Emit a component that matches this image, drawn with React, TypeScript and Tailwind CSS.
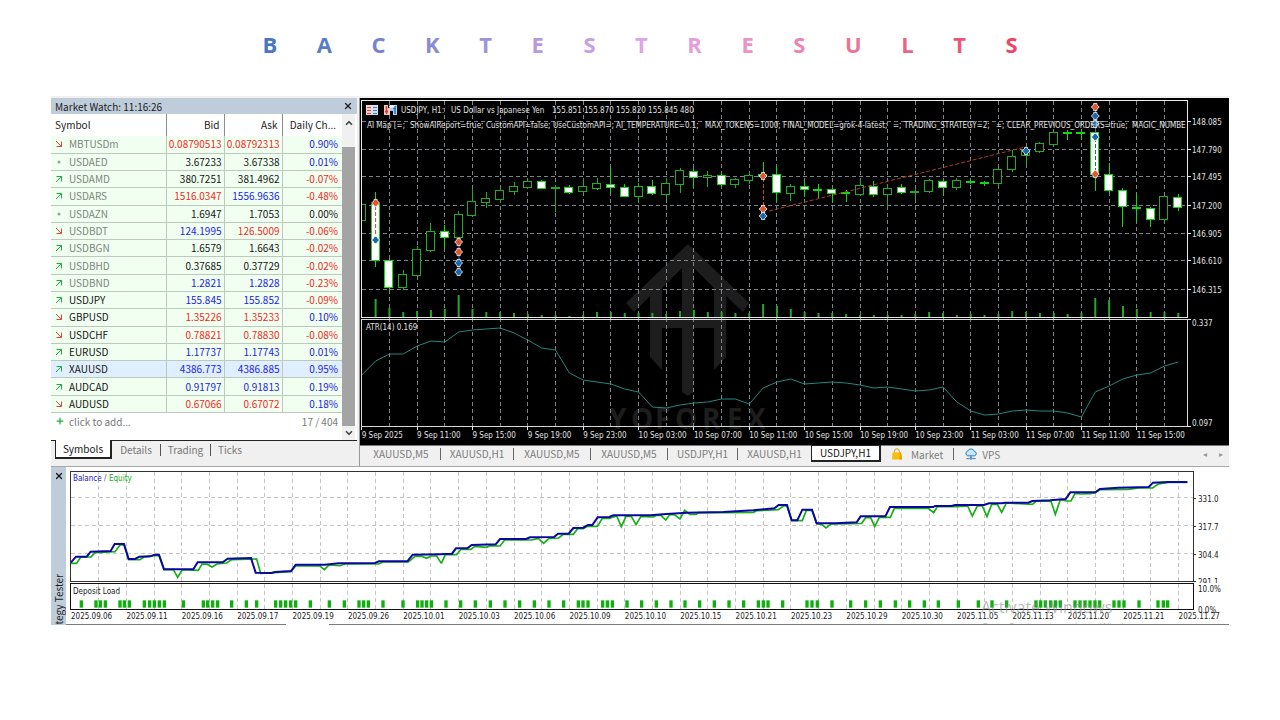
import { ChevronDown, ChevronUp, Plus, X } from 'lucide-react'
import { clsx } from 'clsx'

const TITLE = [
  { letter: 'B', color: 'text-[#4a78c0]' },
  { letter: 'A', color: 'text-[#5a7dc6]' },
  { letter: 'C', color: 'text-[#7584cb]' },
  { letter: 'K', color: 'text-[#8a8bd0]' },
  { letter: 'T', color: 'text-[#a093d7]' },
  { letter: 'E', color: 'text-[#b59bde]' },
  { letter: 'S', color: 'text-[#c8a0e3]' },
  { letter: 'T', color: 'text-[#dda4e8]' },
  { letter: 'R', color: 'text-[#e69ddb]' },
  { letter: 'E', color: 'text-[#ea93c8]' },
  { letter: 'S', color: 'text-[#ea86b2]' },
  { letter: 'U', color: 'text-[#eb7499]' },
  { letter: 'L', color: 'text-[#ec6485]' },
  { letter: 'T', color: 'text-[#ed5576]' },
  { letter: 'S', color: 'text-[#ef4763]' },
]

type Tone = 'up' | 'down' | 'flat'

interface Quote {
  symbol: string
  trend: Tone
  bid: [string, Tone]
  ask: [string, Tone]
  change: [string, Tone]
  muted?: boolean
  selected?: boolean
}

const QUOTES: Quote[] = [
  { symbol: 'MBTUSDm', trend: 'down', bid: ['0.08790513', 'down'], ask: ['0.08792313', 'down'], change: ['0.90%', 'up'], muted: true },
  { symbol: 'USDAED', trend: 'flat', bid: ['3.67233', 'flat'], ask: ['3.67338', 'flat'], change: ['0.01%', 'up'], muted: true },
  { symbol: 'USDAMD', trend: 'up', bid: ['380.7251', 'flat'], ask: ['381.4962', 'flat'], change: ['-0.07%', 'down'], muted: true },
  { symbol: 'USDARS', trend: 'up', bid: ['1516.0347', 'down'], ask: ['1556.9636', 'up'], change: ['-0.48%', 'down'], muted: true },
  { symbol: 'USDAZN', trend: 'flat', bid: ['1.6947', 'flat'], ask: ['1.7053', 'flat'], change: ['0.00%', 'flat'], muted: true },
  { symbol: 'USDBDT', trend: 'down', bid: ['124.1995', 'up'], ask: ['126.5009', 'down'], change: ['-0.06%', 'down'], muted: true },
  { symbol: 'USDBGN', trend: 'up', bid: ['1.6579', 'flat'], ask: ['1.6643', 'flat'], change: ['-0.02%', 'down'], muted: true },
  { symbol: 'USDBHD', trend: 'up', bid: ['0.37685', 'flat'], ask: ['0.37729', 'flat'], change: ['-0.02%', 'down'], muted: true },
  { symbol: 'USDBND', trend: 'up', bid: ['1.2821', 'up'], ask: ['1.2828', 'up'], change: ['-0.23%', 'down'], muted: true },
  { symbol: 'USDJPY', trend: 'up', bid: ['155.845', 'up'], ask: ['155.852', 'up'], change: ['-0.09%', 'down'] },
  { symbol: 'GBPUSD', trend: 'down', bid: ['1.35226', 'down'], ask: ['1.35233', 'down'], change: ['0.10%', 'up'] },
  { symbol: 'USDCHF', trend: 'down', bid: ['0.78821', 'down'], ask: ['0.78830', 'down'], change: ['-0.08%', 'down'] },
  { symbol: 'EURUSD', trend: 'up', bid: ['1.17737', 'up'], ask: ['1.17743', 'up'], change: ['0.01%', 'up'] },
  { symbol: 'XAUUSD', trend: 'up', bid: ['4386.773', 'up'], ask: ['4386.885', 'up'], change: ['0.95%', 'up'], selected: true },
  { symbol: 'AUDCAD', trend: 'up', bid: ['0.91797', 'up'], ask: ['0.91813', 'up'], change: ['0.19%', 'up'] },
  { symbol: 'AUDUSD', trend: 'down', bid: ['0.67066', 'down'], ask: ['0.67072', 'down'], change: ['0.18%', 'up'] },
]

const TONE_CLASS: Record<Tone, string> = {
  up: 'text-[#2222e6]',
  down: 'text-[#f02a1e]',
  flat: 'text-[#151515]',
}

const TrendIcon = ({ trend }: { trend: Tone }) => {
  if (trend === 'flat') {
    return (
      <svg viewBox="0 0 8 8" className="size-2" aria-hidden="true">
        <circle cx="4" cy="4" r="1.5" fill="#8fa595" />
      </svg>
    )
  }
  return (
    <svg viewBox="0 0 8 8" className="size-2" fill="none" strokeWidth="1" aria-hidden="true">
      {trend === 'up' ? (
        <path d="M1.5 1.5H6.5V6.5M6.5 1.5L1 7" stroke="#1fae3d" />
      ) : (
        <path d="M1.5 6.5H6.5V1.5M6.5 6.5L1 1" stroke="#e0483e" />
      )}
    </svg>
  )
}

const MarketWatch = () => {
  return (
    <section className="flex w-[306px] shrink-0 flex-col text-[10px] text-[#222]">
      <header className="flex h-4 items-center justify-between bg-[#bfcddb] px-1 text-[#1c1c1c]">
        <h2>Market Watch: 11:16:26</h2>
        <button type="button" aria-label="Close Market Watch">
          <X className="size-2.5" strokeWidth={3} />
        </button>
      </header>
      <div className="flex flex-1 bg-white pr-0.5">
        <div className="flex flex-1 flex-col">
          <table className="h-[299px] w-full table-fixed border-collapse leading-none">
            <colgroup>
              <col />
              <col className="w-[58px]" />
              <col className="w-[58px]" />
              <col className="w-[60px]" />
            </colgroup>
            <thead>
              <tr className="h-[22px]">
                <th className="border-r border-[#8c8c8c] pl-1 text-left font-normal">Symbol</th>
                <th className="border-r border-[#8c8c8c] pr-1 text-right font-normal">Bid</th>
                <th className="border-r border-[#8c8c8c] pr-1 text-right font-normal">Ask</th>
                <th className="pr-1.5 text-right font-normal">Daily Ch...</th>
              </tr>
            </thead>
            <tbody>
              {QUOTES.map((quote) => (
                <tr
                  key={quote.symbol}
                  className={clsx(
                    'h-[17px] border-b border-[#bccabc]',
                    quote.selected ? 'bg-[#e0efff]' : 'bg-[#f0fff0]',
                  )}
                >
                  <td className="border-r border-[#bccabc] p-0 pl-1">
                    <span className="flex items-center gap-1.5">
                      <TrendIcon trend={quote.trend} />
                      <span className={quote.muted ? 'text-[#7c857c]' : 'text-[#151515]'}>
                        {quote.symbol}
                      </span>
                    </span>
                  </td>
                  <td className={clsx('border-r border-[#bccabc] p-0 pr-0.5 text-right', TONE_CLASS[quote.bid[1]])}>
                    {quote.bid[0]}
                  </td>
                  <td className={clsx('border-r border-[#bccabc] p-0 pr-0.5 text-right', TONE_CLASS[quote.ask[1]])}>
                    {quote.ask[0]}
                  </td>
                  <td className={clsx('p-0 pr-1 text-right', TONE_CLASS[quote.change[1]])}>
                    {quote.change[0]}
                  </td>
                </tr>
              ))}
            </tbody>
          </table>
          <div className="flex h-4 items-center justify-between px-1 text-[#7a7a7a]">
            <button type="button" className="flex items-center gap-1">
              <Plus className="size-2.5 text-[#1fae3d]" strokeWidth={3} />
              click to add...
            </button>
            <span>17 / 404</span>
          </div>
        </div>
        <div className="flex w-[13px] flex-col items-center bg-[#f0f0f0] text-[#444]">
          <ChevronUp className="mt-1 mb-[19px] size-2.5" strokeWidth={4} />
          <div className="w-full flex-1 bg-[#a4a4a4]" />
          <ChevronDown className="my-0.5 size-2.5" strokeWidth={4} />
        </div>
      </div>
      <nav className="flex h-[26px] items-start border-t border-[#222] pl-1 text-[#777]">
        <button
          type="button"
          className="-mt-px h-[19px] w-[57px] border border-t-0 border-r-2 border-b-2 border-[#222] bg-white text-[#151515]"
        >
          Symbols
        </button>
        <button type="button" className="h-[17px] w-12">Details</button>
        <button type="button" className="my-[3px] h-3 w-[51px] border-x border-[#555] leading-[10px]">Trading</button>
        <button type="button" className="h-[17px] w-[38px]">Ticks</button>
      </nav>
    </section>
  )
}

const STEP = 13.84
const FIRST_X = 375.6
const barX = (index: number) => FIRST_X + index * STEP

// [index, high, body top, body bottom, low, filled]
const CANDLES: [number, number, number, number, number, 0 | 1][] = [
  [-1, 204, 204, 220, 220, 0],
  [0, 192, 204, 260, 266, 1],
  [1, 259, 260, 287, 290, 1],
  [2, 270, 274, 287, 289, 0],
  [3, 246, 249, 275, 276, 0],
  [4, 223, 231, 250, 251, 0],
  [5, 225, 231, 237, 247, 1],
  [6, 211, 214, 237, 240, 0],
  [7, 189, 201, 215, 216, 0],
  [8, 192, 198, 202, 207, 0],
  [9, 189, 190, 199, 201, 0],
  [10, 182, 186, 191, 194, 0],
  [11, 180, 181, 187, 188, 0],
  [12, 180, 181, 188, 188, 1],
  [13, 185, 187, 188, 211, 0],
  [14, 185, 187, 192, 193, 1],
  [15, 178, 186, 191, 192, 0],
  [16, 178, 183, 188, 189, 0],
  [17, 168, 184, 187, 192, 1],
  [18, 184, 187, 196, 196, 1],
  [19, 183, 186, 196, 200, 0],
  [20, 180, 186, 193, 194, 1],
  [21, 178, 183, 194, 198, 0],
  [22, 168, 170, 184, 192, 0],
  [23, 168, 171, 177, 187, 1],
  [24, 171, 175, 177, 186, 0],
  [25, 173, 175, 184, 186, 1],
  [26, 178, 179, 184, 187, 0],
  [27, 172, 175, 180, 183, 0],
  [28, 162, 174, 176, 177, 1],
  [29, 166, 174, 192, 201, 1],
  [30, 184, 186, 193, 200, 0],
  [31, 181, 186, 189, 196, 1],
  [32, 184, 189, 190, 198, 1],
  [33, 188, 189, 193, 201, 1],
  [34, 190, 192, 193, 201, 1],
  [35, 179, 185, 194, 195, 0],
  [36, 181, 186, 194, 196, 1],
  [37, 184, 188, 194, 206, 0],
  [38, 184, 187, 192, 193, 1],
  [39, 189, 191, 192, 198, 0],
  [40, 179, 180, 191, 192, 0],
  [41, 179, 181, 187, 195, 1],
  [42, 178, 180, 187, 189, 0],
  [43, 179, 181, 182, 183, 1],
  [44, 181, 182, 183, 185, 1],
  [45, 168, 169, 183, 184, 0],
  [46, 150, 156, 169, 171, 0],
  [47, 150, 150, 155, 164, 0],
  [48, 142, 143, 151, 152, 0],
  [49, 131, 132, 144, 145, 0],
  [50, 130, 132, 133, 139, 1],
  [51, 130, 132, 133, 139, 1],
  [52, 104, 132, 174, 190, 1],
  [53, 163, 174, 190, 193, 1],
  [54, 188, 190, 206, 226, 1],
  [55, 194, 207, 208, 220, 1],
  [56, 207, 208, 219, 226, 1],
  [57, 196, 196, 219, 221, 0],
  [58, 194, 197, 207, 210, 1],
]

const VOLUME_TOPS = [
  299, 308, 312, 311, 310, 309, 295, 309, 312, 312, 313, 314, 315, 315, 316, 315, 312, 312, 313, 313,
  313, 314, 311, 310, 312, 312, 313, 313, 304, 306, 309, 312, 313, 313, 314, 315, 315, 315, 315, 314,
  312, 313, 315, 314, 315, 314, 311, 312, 313, 313, 314, 313, 298, 300, 306, 309, 312, 312, 313,
]

// Starts one bar before the first full candle
const ATR = [
  375, 361, 354, 354, 346, 341, 342, 332, 330, 329, 328, 333, 340, 348, 350, 373, 380, 382, 384, 389,
  392, 407, 408, 405, 403, 402, 399, 399, 404, 388, 382, 379, 384, 383, 382, 383, 385, 388, 387, 389,
  391, 390, 387, 402, 411, 415, 414, 411, 410, 411, 411, 413, 417, 392, 386, 379, 375, 373, 366, 362,
]

const PRICES = [
  { label: '148.085', y: 121 },
  { label: '147.790', y: 149 },
  { label: '147.495', y: 176 },
  { label: '147.200', y: 205 },
  { label: '146.905', y: 233 },
  { label: '146.610', y: 260 },
  { label: '146.315', y: 289 },
]

const TIMES = [
  '9 Sep 2025', '9 Sep 11:00', '9 Sep 15:00', '9 Sep 19:00', '9 Sep 23:00', '10 Sep 03:00',
  '10 Sep 07:00', '10 Sep 11:00', '10 Sep 15:00', '10 Sep 19:00', '10 Sep 23:00', '11 Sep 03:00',
  '11 Sep 07:00', '11 Sep 11:00', '11 Sep 15:00',
]

const HEADING = [
  { x: 401, text: 'USDJPY, H1:' },
  { x: 451, text: 'US Dollar vs Japanese Yen' },
  { x: 552, text: '155.851 155.870 155.820 155.845' },
  { x: 680, text: '480' },
]

const SETTINGS = [
  { x: 367, text: 'AI Map [=;' },
  { x: 410, text: 'ShowAIReport=true;' },
  { x: 486, text: 'CustomAPI=false;' },
  { x: 553, text: 'UseCustomAPI=;' },
  { x: 616, text: 'AI_TEMPERATURE=0.1;' },
  { x: 705, text: 'MAX_TOKENS=1000;' },
  { x: 783, text: 'FINAL_MODEL=grok-4-latest;' },
  { x: 893, text: '=;' },
  { x: 904, text: 'TRADING_STRATEGY=2;' },
  { x: 996, text: '=;' },
  { x: 1007, text: 'CLEAR_PREVIOUS_ORDERS=true;' },
  { x: 1132, text: 'MAGIC_NUMBE' },
]

const WATERMARK = [
  { x: 609, letter: 'Y' },
  { x: 631, letter: 'O' },
  { x: 655, letter: 'F' },
  { x: 675, letter: 'O' },
  { x: 702, letter: 'R' },
  { x: 727, letter: 'E' },
  { x: 747, letter: 'X' },
]

const DEALS = [
  { bar: 0, y: 203, side: 'sell' },
  { bar: 0, y: 240, side: 'buy' },
  { bar: 6, y: 242, side: 'sell' },
  { bar: 6, y: 252, side: 'sell' },
  { bar: 6, y: 263, side: 'buy' },
  { bar: 6, y: 272, side: 'buy' },
  { bar: 28, y: 176, side: 'sell' },
  { bar: 28, y: 209, side: 'sell' },
  { bar: 28, y: 216, side: 'buy' },
  { bar: 47, y: 151, side: 'buy' },
  { bar: 52, y: 107, side: 'sell' },
  { bar: 52, y: 116, side: 'buy' },
  { bar: 52, y: 124, side: 'buy' },
  { bar: 52, y: 137, side: 'buy' },
  { bar: 52, y: 174, side: 'sell' },
]

const PriceChart = () => {
  return (
    <svg
      viewBox="360 98 869 347"
      role="img"
      aria-label="USDJPY H1 price chart with ATR"
      className="block w-full bg-black text-[8px] [font-family:'DejaVu_Sans_Condensed','DejaVu_Sans',sans-serif]"
    >
      <g fill="#1d1d1e">
        <path d="M688 244L749 303L743 312L726 296V357L714 370V328H694V392L688 396L682 392V328H662V370L650 357V296L634 312L626 303ZM682 268L662 288V318H682ZM694 268V318H714V288Z" />
        <g className="text-[28px] font-bold [font-family:'Open_Sans','Noto_Sans',sans-serif]">
          {WATERMARK.map(({ x, letter }) => (
            <text key={x} x={x} y="429">{letter}</text>
          ))}
        </g>
      </g>

      <g stroke="#7d838b" strokeDasharray="4 3" shapeRendering="crispEdges">
        {PRICES.map(({ y }) => (
          <line key={y} x1="362" x2="1187" y1={y + 0.5} y2={y + 0.5} />
        ))}
        {Array.from({ length: 29 }, (_, i) => (
          <line key={i} x1={barX(1 + i * 2)} x2={barX(1 + i * 2)} y1="101" y2="426" />
        ))}
      </g>

      <g fill="#2aa52a">
        {VOLUME_TOPS.map((top, i) => (
          <rect key={i} x={barX(i) - 1} y={top} width="2" height={317 - top} />
        ))}
      </g>

      <svg x="362" y="98" width="867" height="347" viewBox="362 98 867 347">
        {CANDLES.map(([index, high, top, bottom, low, filled]) => (
          <g key={index} stroke={filled ? '#12d812' : '#1fae1f'} shapeRendering="crispEdges">
            <line x1={barX(index)} x2={barX(index)} y1={high} y2={low + 1} />
            <rect
              x={Math.round(barX(index) - 4) - 0.5}
              y={top + 0.5}
              width="8"
              height={bottom - top}
              fill={filled ? '#fff' : '#000'}
            />
          </g>
        ))}
      </svg>

      <g strokeDasharray="4 2" fill="none">
        <path d="M375.6 206V240M763.5 178V214" stroke="#c8452c" />
        <path d="M769 211L1025 147" stroke="#b03c28" />
        <path d="M1095.5 138V172" stroke="#1c66b0" />
      </g>
      <path d="M459 244V270M1095.5 110V136" stroke="#3d74b4" />
      {DEALS.map(({ bar, y, side }) => (
        <path
          key={`${bar}-${y}`}
          transform={`translate(${barX(bar)} ${y})`}
          d="M-1.6 -3.6H1.6V-2.2L4 0L1.6 2.2V3.6H-1.6V2.2L-4 0L-1.6 -2.2Z"
          fill={side === 'sell' ? '#e2532f' : '#1a66ae'}
          stroke="#fff"
          strokeWidth="0.8"
        />
      ))}

      <polyline
        points={ATR.map((y, i) => `${barX(i - 1)},${y}`).join(' ')}
        fill="none"
        stroke="#26877c"
      />

      <g fill="none" shapeRendering="crispEdges">
        <rect x="361.5" y="100.5" width="826" height="217" stroke="#e8e8e8" />
        <rect x="361.5" y="319.5" width="826" height="107" stroke="#d8d8d8" />
        {PRICES.map(({ y }) => (
          <line key={y} x1="1188" x2="1191" y1={y + 0.5} y2={y + 0.5} stroke="#e8e8e8" />
        ))}
        <path d="M1188 319.5H1191M1188 426.5H1191" stroke="#e8e8e8" />
        {TIMES.map((time, i) => (
          <line key={time} x1={barX(i * 4 - 1)} x2={barX(i * 4 - 1)} y1="427" y2="430" stroke="#e8e8e8" />
        ))}
      </g>

      <g fill="#e2e2e2">
        {HEADING.map(({ x, text }) => (
          <text key={x} x={x} y="113">{text}</text>
        ))}
        {SETTINGS.map(({ x, text }) => (
          <text key={x} x={x} y="128">{text}</text>
        ))}
        <text x="366" y="330">ATR(14) 0.169</text>
        {PRICES.map(({ label, y }) => (
          <text key={label} x="1192" y={y + 4}>{label}</text>
        ))}
        <text x="1192" y="326">0.337</text>
        <text x="1192" y="426">0.097</text>
        {TIMES.map((time, i) => (
          <text key={time} x={barX(i * 4 - 1)} y="438">{time}</text>
        ))}
      </g>

      <g>
        <rect x="366" y="105" width="6" height="10" fill="#f6d4d0" />
        <rect x="372" y="105" width="6" height="10" fill="#cfe3f8" />
        <path d="M367 107.5H371M367 110.5H371M367 113.5H371" stroke="#d8463c" />
        <path d="M373 107.5H377M373 110.5H377M373 113.5H377" stroke="#3c78c0" />
        <path d="M384 105H388V108H390V115H384Z" fill="#f2c8c4" />
        <path d="M390 105H397V115H393V111H390Z" fill="#a8d4f4" />
        <path d="M386.5 106V114M385 111.5H388" stroke="#d03830" strokeWidth="1.5" fill="none" />
        <path d="M389 106.5H395" stroke="#fff" strokeWidth="2" />
        <path d="M395 106V114M393 108.5H396" stroke="#2a72bc" strokeWidth="1.5" />
      </g>
    </svg>
  )
}

const CHART_TABS = [
  { label: 'XAUUSD,M5', width: 'w-[79px]' },
  { label: 'XAUUSD,H1', width: 'w-[73px]' },
  { label: 'XAUUSD,M5', width: 'w-[77px]' },
  { label: 'XAUUSD,M5', width: 'w-[77px]' },
  { label: 'USDJPY,H1', width: 'w-[70px]' },
  { label: 'XAUUSD,H1', width: 'w-[73px]' },
]

const ChartTabs = () => {
  return (
    <nav className="flex h-[21px] items-start border-t border-[#777] pl-0.5 text-[10px] text-[#7c7c7c]">
      {CHART_TABS.map(({ label, width }, i) => (
        <button
          key={i}
          type="button"
          className={clsx(
            'mt-0.5 h-3 shrink-0 leading-[10px]',
            i < CHART_TABS.length - 1 && 'border-r border-[#666]',
            width,
          )}
        >
          {label}
        </button>
      ))}
      <button
        type="button"
        className="-mt-px h-[17px] w-[70px] shrink-0 border border-r-2 border-b-2 border-[#222] bg-white leading-[14px] text-[#151515]"
      >
        USDJPY,H1
      </button>
      <button type="button" className="ml-2.5 flex h-4 items-center gap-2">
        <svg viewBox="0 0 12 12" className="size-3" aria-hidden="true">
          <path d="M3.5 5V3.2a2.3 2.3 0 0 1 4.8 0V5" fill="none" stroke="#d29a14" />
          <path d="M1.5 4.5H10L11 11.5H1Z" fill="#f9bf06" />
          <path d="M10 4.5L11 11.5H8.6L8.8 4.5Z" fill="#dd9d04" />
        </svg>
        Market
      </button>
      <span className="mt-0.5 ml-2.5 h-3 w-px bg-[#666]" />
      <button type="button" className="ml-2.5 flex h-4 items-center gap-1">
        <svg viewBox="0 0 14 13" className="h-3 w-3.5" fill="none" stroke="#2273b4" aria-hidden="true">
          <path d="M3.5 8.5a2.7 2.7 0 0 1 0-5.2A3.8 3.8 0 0 1 10.6 3.6a2.5 2.5 0 0 1 .2 4.9Z" fill="#bfe8fb" />
          <path d="M7 8.5V11M2 11.5H5.5M8.5 11.5H12" />
          <circle cx="7" cy="11.3" r="1" />
        </svg>
        VPS
      </button>
      <span className="ml-auto flex h-4 items-center gap-3 pr-1.5 text-[8px] text-[#999]">
        <button type="button" aria-label="Scroll tabs left">◂</button>
        <button type="button" aria-label="Scroll tabs right">▸</button>
      </span>
    </nav>
  )
}

// Tester curves are kept in three runs at 3x resolution, each from its own left edge
const TESTER_RUNS = [
  {
    x: 45,
    balance:
      '78,307 93,290 125,290 137,275 197,273 209,252 237,252 251,297 270,297 283,290 316,289 328,284 342,284 357,328 445,328 458,307 533,307 548,296 618,294 632,338 680,339 690,336 738,333 752,314 840,314 880,310 990,309 1002,304 1087,304 1103,284 1185,283',
    equity:
      '78,310 95,310 107,291 138,291 150,278 210,275 225,255 237,254 251,299 285,299 297,291 330,287 342,287 357,329 385,329 398,352 412,329 460,331 471,312 487,313 501,321 516,312 545,309 560,299 635,297 647,340 738,335 752,318 825,318 838,329 852,315 885,317 900,312 1000,312 1015,306 1090,306 1110,289 1130,289 1145,295 1158,288 1175,288 1189,310',
    load: [109, 153, 166, 181, 225, 238, 253, 298, 314, 328, 343, 358, 415, 475, 488, 503, 518, 560, 604, 635, 692, 707, 722, 737, 752, 796, 853, 898, 942, 956, 970, 1014, 1074, 1118, 1131, 1145, 1159],
  },
  {
    x: 440,
    balance:
      '0,283 36,281 48,265 82,265 95,255 167,253 180,237 258,237 270,232 342,231 354,221 386,221 400,204 430,203 444,195 457,195 473,172 508,171 520,166 630,166 680,162 740,158 850,156 940,151 1003,145 1016,135 1041,135 1055,181 1072,181 1087,149 1116,149 1130,190 1185,190',
    equity:
      '4,310 16,284 50,284 63,268 92,268 105,259 140,262 150,257 180,258 194,240 275,240 295,235 311,250 327,235 356,234 370,223 400,223 413,206 430,206 442,199 472,199 487,175 508,175 530,168 544,200 558,169 574,169 588,194 603,169 640,171 650,166 663,166 677,180 690,163 705,165 720,177 734,151 750,163 768,163 775,158 860,158 940,157 950,152 1015,149 1030,138 1041,138 1055,182 1087,182 1099,151 1116,151 1130,191 1145,193 1158,204 1173,192 1185,192',
    load: [18, 62, 106, 151, 195, 239, 283, 327, 371, 415, 429, 444, 488, 502, 517, 561, 605, 649, 693, 735, 779, 823, 867, 911, 955, 970, 984, 1028, 1101, 1116, 1132, 1176],
  },
  {
    x: 835,
    balance:
      '0,190 65,187 77,169 151,169 165,141 295,141 300,138 350,138 360,135 447,135 462,130 500,130 510,128 580,128 592,123 645,121 692,117 706,97 781,97 795,87 850,83 941,81 954,68 1000,66 1057,66',
    equity:
      '0,192 80,190 92,173 107,173 119,200 133,172 166,172 178,145 280,145 296,158 307,140 365,140 398,138 412,168 427,138 442,138 456,170 470,133 487,133 500,157 514,129 592,133 604,123 648,124 661,163 676,119 695,123 708,123 720,100 740,102 765,101 781,98 795,89 880,88 910,84 953,84 970,72 1000,67 1057,67',
    load: [47, 92, 136, 181, 224, 268, 310, 370, 430, 471, 515, 603, 617, 631, 647, 661, 676, 720, 735, 750, 765, 780, 794, 837, 852, 867, 912, 969, 985, 998],
  },
]

const TESTER_DATES = [
  '2025.09.06', '2025.09.11', '2025.09.16', '2025.09.17', '2025.09.19', '2025.09.26', '2025.10.01',
  '2025.10.03', '2025.10.06', '2025.10.09', '2025.10.10', '2025.10.15', '2025.10.21', '2025.10.23',
  '2025.10.29', '2025.10.30', '2025.11.05', '2025.11.13', '2025.11.20', '2025.11.21', '2025.11.27',
]

const TESTER_LEVELS = [
  { label: '331.0', y: 498 },
  { label: '317.7', y: 526 },
  { label: '304.4', y: 554 },
  { label: '291.1', y: 581 },
]

const testerX = (index: number) => 71 + index * 27.69

const StrategyTester = () => {
  return (
    <section className="flex border-t border-[#a8a8a8] bg-white">
      <aside className="flex w-[15px] shrink-0 flex-col items-center justify-between overflow-hidden bg-[#bfcddb] pt-1">
        <button type="button" aria-label="Close tester">
          <X className="size-2.5 text-[#151515]" strokeWidth={3} />
        </button>
        <h2 className="rotate-180 text-[10px] leading-[15px] text-[#222] [writing-mode:vertical-rl]">tegy Tester</h2>
      </aside>
      <svg
        viewBox="66 467 1163 158"
        role="img"
        aria-label="Balance, equity and deposit load"
        className="block min-w-0 flex-1 text-[8px] [font-family:'DejaVu_Sans_Condensed','DejaVu_Sans',sans-serif]"
      >
        <g stroke="#c6c6c6" strokeDasharray="4 3" shapeRendering="crispEdges">
          {TESTER_LEVELS.slice(0, 3).map(({ y }) => (
            <line key={y} x1="71" x2="1194" y1={y - 0.5} y2={y - 0.5} />
          ))}
          {Array.from({ length: 40 }, (_, i) => (
            <line key={i} x1={testerX(i + 1)} x2={testerX(i + 1)} y1="472" y2="609" />
          ))}
        </g>

        {TESTER_RUNS.map(({ x, balance, equity, load }) => (
          <g key={x} transform={`translate(${x} 460) scale(${1 / 3})`} fill="none">
            <polyline points={equity} stroke="#16ae16" strokeWidth="5" />
            <polyline points={balance} stroke="#0808a0" strokeWidth="6" />
            {load.map((left) => (
              <rect key={left} x={left - 5} y="421" width="10" height="22" fill="#0cb10c" />
            ))}
          </g>
        ))}

        <g fill="none" shapeRendering="crispEdges">
          <rect x="70.5" y="471.5" width="1123" height="110" stroke="#333" />
          <rect x="70.5" y="583.5" width="1123" height="26" stroke="#111" />
          {TESTER_LEVELS.map(({ y }) => (
            <line key={y} x1="1194" x2="1196" y1={y + 0.5} y2={y + 0.5} stroke="#333" />
          ))}
        </g>

        <g fill="#1a1a1a">
          <text x="73" y="481" fill="#1818c0">Balance</text>
          <text x="104" y="481" fill="#555">/</text>
          <text x="109" y="481" fill="#16ae16">Equity</text>
          <text x="73" y="594">Deposit Load</text>
          {TESTER_LEVELS.map(({ label, y }) => (
            <text key={label} x="1198" y={y + 4}>{label}</text>
          ))}
          <rect x="1197" y="583" width="32" height="4" fill="#fff" />
          <text x="1198" y="592">10.0%</text>
          <text x="1198" y="613">0.0%</text>
          {TESTER_DATES.map((date, i) => (
            <text key={date} x={testerX(i * 2)} y="619">{date}</text>
          ))}
        </g>

        <g fill="#8c8c8c" fillOpacity="0.6" className="[font-family:'Open_Sans','Noto_Sans',sans-serif]">
          <text x="981" y="613" className="text-[16px]">Activate Windows</text>
          <text x="981" y="631" className="text-[10px]">Go to Settings to activate Windows.</text>
        </g>
        <path d="M66 624.5H286M329 624.5H1229" stroke="#7c7c7c" />
      </svg>
    </section>
  )
}

export default function App() {
  return (
    <div className="min-h-screen bg-white pb-8 [font-family:'Noto_Sans_CJK_SC','Noto_Sans',sans-serif]">
      <h1
        aria-label="Backtest results"
        className="mx-auto flex h-24 w-[59%] items-center justify-between pb-2 text-[22px] font-bold [font-family:'Open_Sans','Noto_Sans',sans-serif]"
      >
        {TITLE.map(({ letter, color }, i) => (
          <span key={i} className={color}>{letter}</span>
        ))}
      </h1>
      <main className="mx-[51px] bg-[#f0f0f0] pt-0.5">
        <div className="flex">
          <MarketWatch />
          <section className="ml-0.5 flex min-w-0 flex-1 flex-col border-l border-[#999]">
            <PriceChart />
            <ChartTabs />
          </section>
        </div>
        <StrategyTester />
      </main>
    </div>
  )
}
